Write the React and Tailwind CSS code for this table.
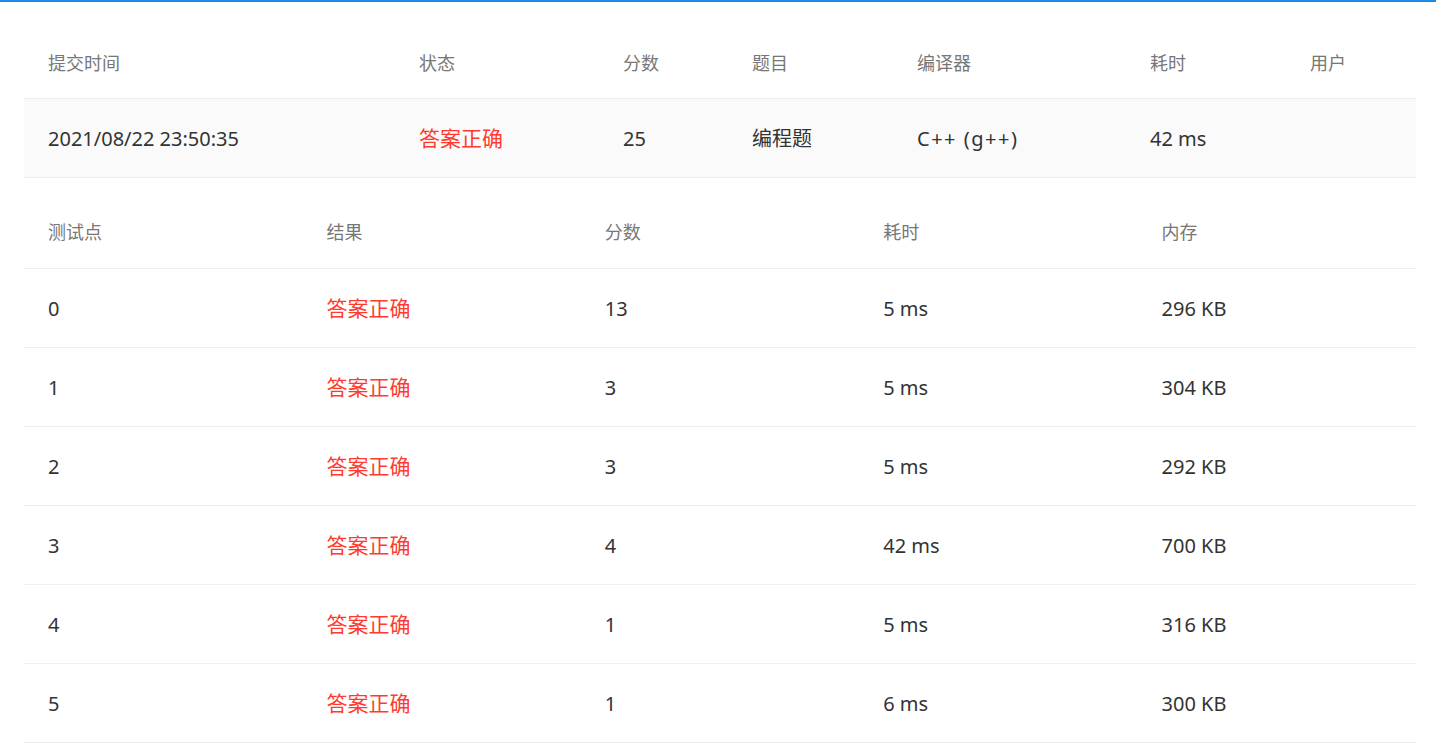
const summary = {
  time: '2021/08/22 23:50:35',
  status: '答案正确',
  score: '25',
  problem: '编程题',
  compiler: 'C++ (g++)',
  cost: '42 ms',
  user: '',
};

const cases = [
  { id: '0', score: '13', time: '5 ms', mem: '296 KB' },
  { id: '1', score: '3', time: '5 ms', mem: '304 KB' },
  { id: '2', score: '3', time: '5 ms', mem: '292 KB' },
  { id: '3', score: '4', time: '42 ms', mem: '700 KB' },
  { id: '4', score: '1', time: '5 ms', mem: '316 KB' },
  { id: '5', score: '1', time: '6 ms', mem: '300 KB' },
];

const font = { fontFamily: '"Noto Sans", "Noto Sans CJK SC", sans-serif' };

const App = () => {
  return (
    <div className="min-h-screen bg-white" style={font}>
      <div className="h-[2px] bg-[#1e88e5]" />
      <div className="pl-6 pr-5">
        {/* submission summary */}
        <div className="grid grid-cols-[371px_204px_129px_165px_233px_160px_1fr] h-[97px] items-center pt-[26px] text-[18px] text-[#777] border-b border-[#eeeeee]">
          <div className="pl-6">提交时间</div>
          <div className="pl-6">状态</div>
          <div className="pl-6">分数</div>
          <div className="pl-6">题目</div>
          <div className="pl-6">编译器</div>
          <div className="pl-6">耗时</div>
          <div className="pl-6">用户</div>
        </div>
        <div className="grid grid-cols-[371px_204px_129px_165px_233px_160px_1fr] h-[79px] items-center pt-[1px] bg-[#fafafa] text-[20px] text-[#333] border-b border-[#eeeeee]">
          <div className="pl-6">{summary.time}</div>
          <div className="pl-6 text-[21px] text-[#ff3b30]">{summary.status}</div>
          <div className="pl-6">{summary.score}</div>
          <div className="pl-6">{summary.problem}</div>
          <div className="pl-6 tracking-[1.5px]">{summary.compiler}</div>
          <div className="pl-6">{summary.cost}</div>
          <div className="pl-6">{summary.user}</div>
        </div>

        {/* test cases */}
        <div className="grid grid-cols-5 h-[91px] items-center pt-[19px] text-[18px] text-[#777] border-b border-[#eeeeee]">
          <div className="pl-6">测试点</div>
          <div className="pl-6">结果</div>
          <div className="pl-6">分数</div>
          <div className="pl-6">耗时</div>
          <div className="pl-6">内存</div>
        </div>
        {cases.map((c) => (
          <div
            key={c.id}
            className="grid grid-cols-5 h-[79px] items-center pt-[1px] text-[20px] text-[#333] border-b border-[#eeeeee]"
          >
            <div className="pl-6">{c.id}</div>
            <div className="pl-6 text-[21px] text-[#ff3b30]">答案正确</div>
            <div className="pl-6">{c.score}</div>
            <div className="pl-6">{c.time}</div>
            <div className="pl-6">{c.mem}</div>
          </div>
        ))}
      </div>
    </div>
  );
};

export default App;
